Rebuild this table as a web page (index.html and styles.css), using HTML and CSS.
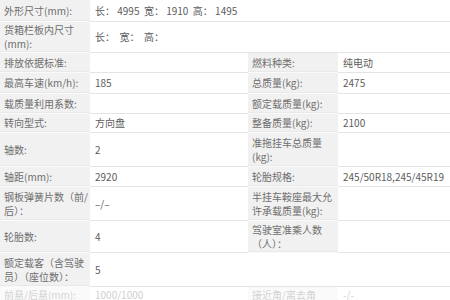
FILE: index.html
```html
<!DOCTYPE html>
<html lang="zh">
<head>
<meta charset="utf-8">
<link rel="stylesheet" href="styles.css">
</head>
<body>
<div class="spec">
  <div class="lbl r1">外形尺寸(mm):</div>
  <div class="val span3 r1 pre">长： 4995  宽： 1910  高： 1495</div>

  <div class="lbl r2">货箱栏板内尺寸<br>(mm):</div>
  <div class="val span3 r2 pre">长：  宽：  高：</div>

  <div class="lbl r3">排放依据标准:</div>
  <div class="val r3"></div>
  <div class="lbl r3">燃料种类:</div>
  <div class="val r3">纯电动</div>

  <div class="lbl r4">最高车速(km/h):</div>
  <div class="val r4">185</div>
  <div class="lbl r4">总质量(kg):</div>
  <div class="val r4">2475</div>

  <div class="lbl r5">载质量利用系数:</div>
  <div class="val r5"></div>
  <div class="lbl r5">额定载质量(kg):</div>
  <div class="val r5"></div>

  <div class="lbl r6">转向型式:</div>
  <div class="val r6">方向盘</div>
  <div class="lbl r6">整备质量(kg):</div>
  <div class="val r6">2100</div>

  <div class="lbl r7">轴数:</div>
  <div class="val r7">2</div>
  <div class="lbl r7">准拖挂车总质量<br>(kg):</div>
  <div class="val r7"></div>

  <div class="lbl r8">轴距(mm):</div>
  <div class="val r8">2920</div>
  <div class="lbl r8">轮胎规格:</div>
  <div class="val r8">245/50R18,245/45R19</div>

  <div class="lbl r9">钢板弹簧片数（前/<br>后）：</div>
  <div class="val r9">–/–</div>
  <div class="lbl r9">半挂车鞍座最大允<br>许承载质量(kg):</div>
  <div class="val r9"></div>

  <div class="lbl r10">轮胎数:</div>
  <div class="val r10">4</div>
  <div class="lbl r10">驾驶室准乘人数<br>（人）：</div>
  <div class="val r10"></div>

  <div class="lbl r11">额定载客（含驾驶<br>员）（座位数）：</div>
  <div class="val span3 r11">5</div>

  <div class="lbl r12 faded">前悬/后悬(mm):</div>
  <div class="val r12 faded">1000/1000</div>
  <div class="lbl r12 faded">接近角/离去角</div>
  <div class="val r12 faded">-/-</div>
</div>
</body>
</html>
```
FILE: styles.css
```css
html, body {
  margin: 0;
  padding: 0;
  background: #ffffff;
}
body {
  font-family: "Noto Sans CJK SC", "Noto Sans", sans-serif;
  font-size: 10px;
  color: #666666;
  width: 450px;
  height: 300px;
  overflow: hidden;
}
.spec {
  display: grid;
  grid-template-columns: 90px 158px 90px 1fr;
  grid-template-rows: 22px 31px 20px 21px 20px 19px 34px 20px 34px 32px 34px 13px;
}
.lbl, .val {
  display: flex;
  align-items: center;
  box-sizing: border-box;
  border-bottom: 1px solid #e4e4e4;
  line-height: 14px;
  white-space: nowrap;
}
.lbl {
  background: #f1f1f1;
  padding: 0 4px;
  color: #6e6e6e;
  border-bottom-color: #fafafa;
  box-shadow: inset 0 -2px 0 -1px #e9e9e9;
}
.val {
  padding: 0 5px;
  color: #5c5c5c;
}
.pre {
  white-space: pre;
}
.span3 {
  grid-column: span 3;
}
.faded {
  opacity: 0.3;
  align-items: flex-start;
  padding-top: 1px;
  border-bottom: 0;
  box-shadow: none;
  overflow: hidden;
}
```
